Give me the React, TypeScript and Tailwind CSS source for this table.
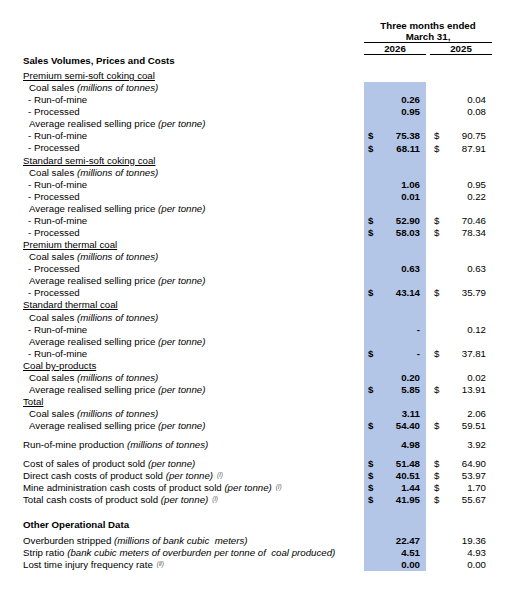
import React from "react";

type R = {
  label: React.ReactNode;
  indent?: number;
  blue?: boolean;
  a?: string;
  ad?: boolean;
  b?: string;
  bd?: boolean;
  h?: number;
  bold?: boolean;
  u?: boolean;
};

const I = ({ children }: { children: React.ReactNode }) => <i>{children}</i>;
const Sup = ({ children }: { children: React.ReactNode }) => (
  <sup className="ml-[4px] text-[6.5px] italic text-[#555] relative top-[-2px]">{children}</sup>
);

const H = 12.09;

const rows: R[] = [
  { label: "Premium semi-soft coking coal", u: true, blue: false },
  { label: <>Coal sales <I>(millions of tonnes)</I></>, indent: 6 },
  { label: "- Run-of-mine", indent: 5, a: "0.26", b: "0.04" },
  { label: "- Processed", indent: 5, a: "0.95", b: "0.08" },
  { label: <>Average realised selling price <I>(per tonne)</I></>, indent: 6 },
  { label: "- Run-of-mine", indent: 5, a: "75.38", ad: true, b: "90.75", bd: true },
  { label: "- Processed", indent: 5, a: "68.11", ad: true, b: "87.91", bd: true },
  { label: "Standard semi-soft coking coal", u: true },
  { label: <>Coal sales <I>(millions of tonnes)</I></>, indent: 6 },
  { label: "- Run-of-mine", indent: 5, a: "1.06", b: "0.95" },
  { label: "- Processed", indent: 5, a: "0.01", b: "0.22" },
  { label: <>Average realised selling price <I>(per tonne)</I></>, indent: 6 },
  { label: "- Run-of-mine", indent: 5, a: "52.90", ad: true, b: "70.46", bd: true },
  { label: "- Processed", indent: 5, a: "58.03", ad: true, b: "78.34", bd: true },
  { label: "Premium thermal coal", u: true },
  { label: <>Coal sales <I>(millions of tonnes)</I></>, indent: 6 },
  { label: "- Processed", indent: 5, a: "0.63", b: "0.63" },
  { label: <>Average realised selling price <I>(per tonne)</I></>, indent: 6 },
  { label: "- Processed", indent: 5, a: "43.14", ad: true, b: "35.79", bd: true },
  { label: "Standard thermal coal", u: true },
  { label: <>Coal sales <I>(millions of tonnes)</I></>, indent: 6 },
  { label: "- Run-of-mine", indent: 5, a: "-", b: "0.12" },
  { label: <>Average realised selling price <I>(per tonne)</I></>, indent: 6 },
  { label: "- Run-of-mine", indent: 5, a: "-", ad: true, b: "37.81", bd: true },
  { label: "Coal by-products", u: true },
  { label: <>Coal sales <I>(millions of tonnes)</I></>, indent: 6, a: "0.20", b: "0.02" },
  { label: <>Average realised selling price <I>(per tonne)</I></>, indent: 6, a: "5.85", ad: true, b: "13.91", bd: true },
  { label: "Total", u: true },
  { label: <>Coal sales <I>(millions of tonnes)</I></>, indent: 6, a: "3.11", b: "2.06" },
  { label: <>Average realised selling price <I>(per tonne)</I></>, indent: 6, a: "54.40", ad: true, b: "59.51", bd: true },
  { label: "", h: 7 },
  { label: <>Run-of-mine production <I>(millions of tonnes)</I></>, a: "4.98", b: "3.92" },
  { label: "", h: 6.5 },
  { label: <>Cost of sales of product sold <I>(per tonne)</I></>, a: "51.48", ad: true, b: "64.90", bd: true },
  { label: <>Direct cash costs of product sold <I>(per tonne)</I><Sup>(i)</Sup></>, a: "40.51", ad: true, b: "53.97", bd: true },
  { label: <>Mine administration cash costs of product sold <I>(per tonne)</I><Sup>(i)</Sup></>, a: "1.44", ad: true, b: "1.70", bd: true },
  { label: <>Total cash costs of product sold <I>(per tonne)</I><Sup>(i)</Sup></>, a: "41.95", ad: true, b: "55.67", bd: true },
  { label: "", h: 12.4 },
  { label: "Other Operational Data", bold: true },
  { label: "", h: 4.2 },
  { label: <>Overburden stripped <I>(millions of bank cubic&nbsp; meters)</I></>, a: "22.47", b: "19.36" },
  { label: <>Strip ratio <I>(bank cubic meters of overburden per tonne of&nbsp; coal produced)</I></>, a: "4.51", b: "4.93" },
  { label: <>Lost time injury frequency rate<Sup>(ii)</Sup></>, a: "0.00", b: "0.00" },
];

function Row({ r }: { r: R }) {
  const blue = r.blue !== false;
  const h = r.h ?? H;
  return (
    <div className="flex items-center" style={{ height: h }}>
      <div
        className={`w-[341px] whitespace-pre ${r.bold ? "font-bold" : ""}`}
        style={{ paddingLeft: r.indent ?? 0, lineHeight: `${h}px` }}
      >
        {r.u ? <span className="underline underline-offset-[1px]">{r.label}</span> : r.label}
      </div>
      <div
        className={`w-[62px] h-full flex items-center justify-between pl-[4px] pr-[6px] font-bold ${
          blue ? "bg-[#b4c6e7]" : ""
        }`}
      >
        <span>{r.ad ? "$" : ""}</span>
        <span>{r.a ?? ""}</span>
      </div>
      <div className="w-[4px]" />
      <div className="w-[62px] h-full flex items-center justify-between pl-[4px] pr-[6px]">
        <span>{r.bd ? "$" : ""}</span>
        <span>{r.b ?? ""}</span>
      </div>
    </div>
  );
}

export default function App() {
  return (
    <div className="w-[512px] h-[593px] bg-white text-black font-['Liberation_Sans',Arial,sans-serif] text-[9.7px] leading-[12px] pl-[23px] pt-[20px] overflow-hidden">
      <div className="flex">
        <div className="w-[341px]" />
        <div className="w-[128px] flex flex-col items-center font-bold">
          <div className="h-[11px] leading-[11px]">Three months ended</div>
          <div className="h-[12px] leading-[11px] w-full text-center border-b border-black">March 31,</div>
          <div className="flex w-full">
            <div className="w-[62px] h-[12px] leading-[11px] text-center border-b border-black">2026</div>
            <div className="w-[4px]" />
            <div className="w-[62px] h-[12px] leading-[11px] text-center border-b border-black">2025</div>
          </div>
        </div>
      </div>
      <div className="h-[11px] leading-[11px] font-bold">Sales Volumes, Prices and Costs</div>
      <div className="h-[4px]" />
      {rows.map((r, i) => (
        <Row key={i} r={r} />
      ))}
    </div>
  );
}
